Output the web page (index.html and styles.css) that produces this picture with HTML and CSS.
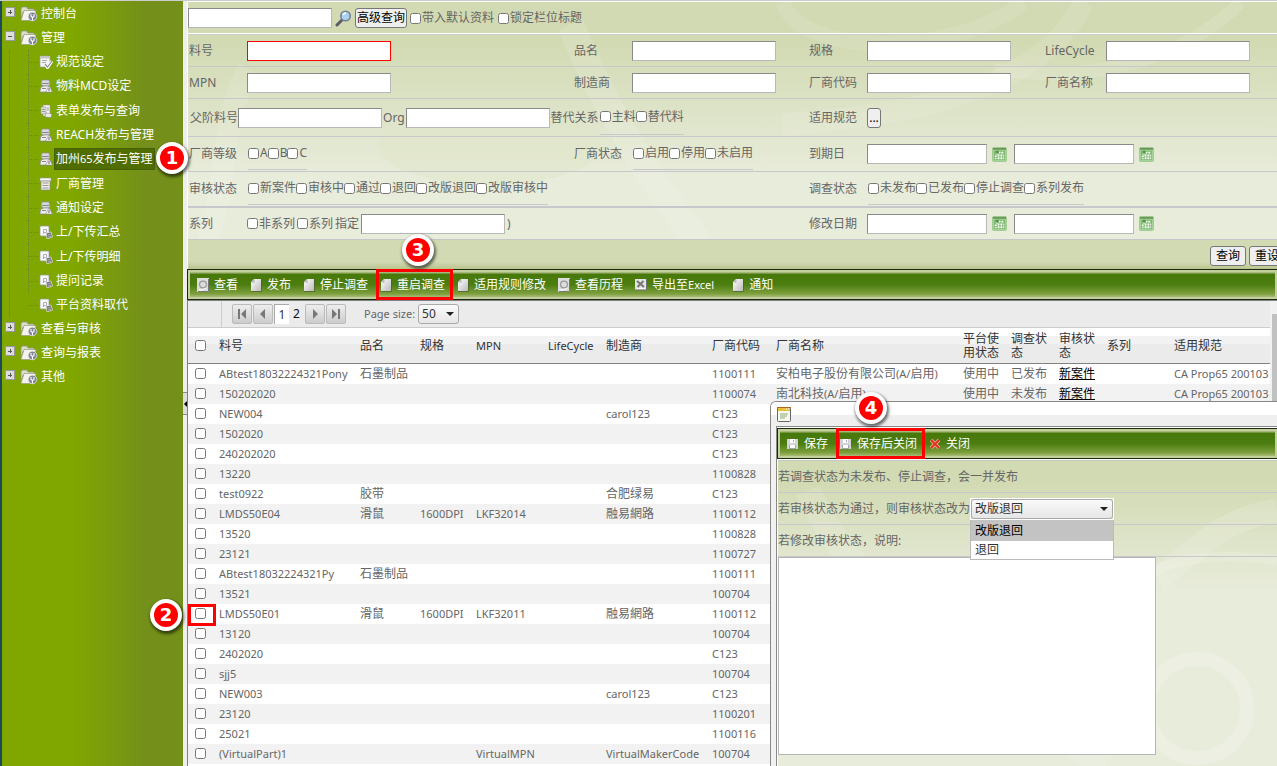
FILE: index.html
```html
<!DOCTYPE html>
<html lang="zh-CN">
<head>
<meta charset="utf-8">
<title>加州65发布与管理</title>
<link rel="stylesheet" href="styles.css">
</head>
<body>
<svg class="defs" aria-hidden="true">
  <defs>
    <linearGradient id="paper" x1="0" y1="0" x2="1" y2="1"><stop offset="0" stop-color="#fff"/><stop offset="1" stop-color="#bbb"/></linearGradient>
    <symbol id="i-folder" viewBox="0 0 18 16">
      <path d="M1 3l1-2h5l1 2h6v3H3L1 13z" fill="#d9dccb" stroke="#8c9080" stroke-width=".7"/>
      <path d="M4 4.500h12l-2 10H1z" fill="#f4f4ec" stroke="#959b80" stroke-width=".7"/>
      <circle cx="12.500" cy="10.500" r="4.300" fill="#7d8492" stroke="#e4e6e8" stroke-width=".8"/>
      <path d="M11 8v2.500l1.500 1 1.500-1V8M12.500 11.500v3" stroke="#fff" stroke-width="1.100" fill="none"/>
    </symbol>
    <symbol id="i-form" viewBox="0 0 14 14">
      <path d="M1 1h10v11H1z" fill="#f4f4f4" stroke="#999" stroke-width=".7"/>
      <path d="M1 1h10v2.500H1z" fill="#c4c4c4"/><path d="M3 5.500h5M3 7.500h4" stroke="#aaa"/>
      <path d="M6 9l2.500 3.500L13 6" stroke="#fff" stroke-width="3" fill="none"/><path d="M6 9l2.500 3L13 6" stroke="#8a8f93" stroke-width="1.200" fill="none"/>
    </symbol>
    <symbol id="i-user" viewBox="0 0 14 14">
      <path d="M3 1h7l1 4-1 2H4L2 5z" fill="#d9d9dd" stroke="#8b8f94" stroke-width=".7"/>
      <path d="M1 12l1-4 3-1h5l2 2v4H1z" fill="#eee" stroke="#888" stroke-width=".7"/>
      <path d="M3 4.500h7M3 9.500h4" stroke="#83898f"/><path d="M10 7l3.500 6h-7z" fill="#f7f7f7" stroke="#888" stroke-width=".6"/><path d="M10 9v3" stroke="#666"/>
    </symbol>
    <symbol id="i-stack" viewBox="0 0 14 14">
      <path d="M4 1h7v11H4z" fill="#f4f4f4" stroke="#999" stroke-width=".6"/><path d="M2 3h5v7H2z" fill="#ddd" stroke="#999" stroke-width=".6"/>
      <path d="M3 5.500h3M3 7.500h3M8 4h2M8 6h2" stroke="#999"/><path d="M7 9l6 1-1 3.500-6-.5z" fill="#eee" stroke="#888" stroke-width=".6"/>
    </symbol>
    <symbol id="i-list" viewBox="0 0 14 14">
      <path d="M1 1h11v3H1z" fill="#fafafa" stroke="#999" stroke-width=".6"/><path d="M2 4h9v9H2z" fill="#ededed" stroke="#8b8b8b" stroke-width=".7"/>
      <path d="M3.500 6h6M3.500 8.500h6M3.500 11h6" stroke="#999"/>
    </symbol>
    <symbol id="i-copy" viewBox="0 0 14 14">
      <rect x="1" y="1" width="9" height="10" rx="1" fill="#f8f8f8" stroke="#999" stroke-width=".7"/><path d="M4.500 9V4.500h3v3h-3" fill="none" stroke="#aab0b8"/>
      <path d="M7 8l5-1 1.500 5-5.500 2z" fill="#72777c" stroke="#e9e9e9" stroke-width=".7"/><path d="M8.500 10l3-.5M9 12l3-.6" stroke="#ddd" stroke-width=".6"/>
    </symbol>
    <symbol id="i-view" viewBox="0 0 12 14">
      <path d="M0 0h12v14H0z" fill="#ddd"/><path d="M11.500 1v12.500H1" stroke="#777" fill="none"/><circle cx="6" cy="6.500" r="4" fill="#969696"/><circle cx="6" cy="6.500" r="2.800" fill="#dcdcdc"/><path d="M2 12h3l4-2" stroke="#fff" fill="none"/>
    </symbol>
    <symbol id="i-page" viewBox="0 0 12 14">
      <path d="M1 4l3-3h7v12H1z" fill="url(#paper)"/><path d="M1 4.500h3.500V1z" fill="#b5b5b5"/><path d="M11.500 1v12.500H1" stroke="#4d5d30" stroke-width=".7" fill="none"/>
    </symbol>
    <symbol id="i-excel" viewBox="0 0 12 14">
      <path d="M0 1h12v11H0z" fill="#e5e5e5"/><path d="M11.500 1v11H0" stroke="#737373" fill="none"/><path d="M2 3l7 6M8.500 3l-6 6" stroke="#777" stroke-width="2"/><path d="M2 10.500h8" stroke="#fff"/>
    </symbol>
    <symbol id="i-save" viewBox="0 0 12 12">
      <path d="M0 1h11v10H0z" fill="#d4d4d8"/><path d="M3 1h5v4H3z" fill="#fff"/><path d="M6 2h1v2H6zM2 7h7v4H2z" fill="#a3a4aa"/><path d="M3 7h5v3H3z" fill="#fff"/>
    </symbol>
    <symbol id="i-close" viewBox="0 0 12 12">
      <path d="M2 2l8 8M10 2l-8 8" stroke="#f0a898" stroke-width="3.600"/><path d="M2 2l8 8M10 2l-8 8" stroke="#e03020" stroke-width="1.800"/>
    </symbol>
    <symbol id="i-cal" viewBox="0 0 16 16">
      <rect x=".5" y=".5" width="15" height="15" rx="1.500" fill="#a5d69a" stroke="#9fc993"/><path d="M1 1h14v2H1z" fill="#6d9855"/><path d="M2 4h12v10H2z" fill="#7cb96c"/>
      <path d="M4 6h2v2H4zM7 5h2v2H7zM10 5h2v2h-2zM3 9h2v2H3zM6 8h2v2H6zM9 8h2v2H9zM12 8h1v2h-1zM3 12h2v1H3zM6 11h2v2H6zM9 11h2v2H9zM12 11h1v2h-1z" fill="#fff"/><path d="M4 4h3v3H4z" fill="#4f9745"/>
    </symbol>
  </defs>
</svg>

<div class="app">
  <nav class="sidebar">
    <ul class="tree">
      <li><i class="knob plus"></i><svg class="folder"><use href="#i-folder"/></svg><a href="#">控制台</a></li>
      <li><i class="knob"></i><svg class="folder"><use href="#i-folder"/></svg><a href="#">管理</a></li>
    </ul>
    <ul class="tree subtree">
      <li><svg><use href="#i-form"/></svg><a href="#">规范设定</a></li>
      <li><svg><use href="#i-user"/></svg><a href="#">物料MCD设定</a></li>
      <li><svg><use href="#i-stack"/></svg><a href="#">表单发布与查询</a></li>
      <li><svg><use href="#i-user"/></svg><a href="#">REACH发布与管理</a></li>
      <li><svg><use href="#i-user"/></svg><a href="#" class="active">加州<span class="latin">65</span>发布与管理</a></li>
      <li><svg><use href="#i-list"/></svg><a href="#">厂商管理</a></li>
      <li><svg><use href="#i-user"/></svg><a href="#">通知设定</a></li>
      <li><svg><use href="#i-copy"/></svg><a href="#">上/下传汇总</a></li>
      <li><svg><use href="#i-copy"/></svg><a href="#">上/下传明细</a></li>
      <li><svg><use href="#i-copy"/></svg><a href="#">提问记录</a></li>
      <li><svg><use href="#i-copy"/></svg><a href="#">平台资料取代</a></li>
    </ul>
    <ul class="tree">
      <li><i class="knob plus"></i><svg class="folder"><use href="#i-folder"/></svg><a href="#">查看与审核</a></li>
      <li><i class="knob plus"></i><svg class="folder"><use href="#i-folder"/></svg><a href="#">查询与报表</a></li>
      <li><i class="knob plus"></i><svg class="folder"><use href="#i-folder"/></svg><a href="#">其他</a></li>
    </ul>
  </nav>
  <div class="splitter"><button class="collapse" aria-label="收起"></button></div>

  <main class="main">
    <form class="query">
      <svg class="swirl" viewBox="0 0 1089 240" preserveAspectRatio="none" aria-hidden="true">
        <g fill="none" stroke="#fff">
          <path d="M590 0C610 50 760 50 830 0" stroke-width="14" opacity=".1"/>
          <path d="M590 110C750 100 850 70 890 0" stroke-width="20" opacity=".1"/>
          <path d="M800 60C900 75 990 50 1045 0" stroke-width="12" opacity=".12"/>
          <path d="M380 20C410 90 470 180 530 240" stroke-width="26" opacity=".12"/>
          <path d="M10 240C40 180 30 110 60 60" stroke-width="22" opacity=".1"/>
          <path d="M330 240C360 220 380 220 400 240" stroke-width="5" opacity=".2"/>
        </g>
        <ellipse cx="300" cy="130" rx="110" ry="34" fill="#dfe6c8" opacity=".5"/>
      </svg>
      <div class="searchbar">
        <input type="text" aria-label="快速查询">
        <svg class="lens" viewBox="0 0 17 17"><path d="M2 15l5-5" stroke="#5c5c66" stroke-width="3" stroke-linecap="round"/><circle cx="10.500" cy="6" r="4.700" fill="#a9d3ee" stroke="#787f93" stroke-width="1.600"/><path d="M8 5q1-2 3-2" stroke="#fff" stroke-width="1.500" fill="none"/></svg>
        <button type="button">高级查询</button>
        <label class="check"><input type="checkbox">带入默认资料</label>
        <label class="check spaced"><input type="checkbox">锁定栏位标题</label>
      </div>
      <div class="fields">
        <div class="row">
          <label for="pn">料号</label><input id="pn" class="required" type="text">
          <label for="name">品名</label><input id="name" type="text">
          <label for="spec">规格</label><input id="spec" type="text">
          <label for="lc">LifeCycle</label><input id="lc" type="text">
        </div>
        <div class="row">
          <label for="mpn">MPN</label><input id="mpn" type="text">
          <label for="maker">制造商</label><input id="maker" type="text">
          <label for="vcode">厂商代码</label><input id="vcode" type="text">
          <label for="vname">厂商名称</label><input id="vname" type="text">
        </div>
        <div class="row tall">
          <div class="parent"><label for="parent">父阶料号</label><input id="parent" type="text"><label for="org" class="org">Org</label><input id="org" type="text"><span>替代关系</span>
            <div class="checks"><label class="check"><input type="checkbox">主料</label><label class="check"><input type="checkbox">替代料</label></div></div>
          <span class="label">适用规范</span><div><button type="button" class="more">...</button></div>
        </div>
        <div class="row mid">
          <span class="label">厂商等级</span>
          <div class="checks"><label class="check"><input type="checkbox">A</label><label class="check"><input type="checkbox">B</label><label class="check"><input type="checkbox">C</label></div>
          <span class="label">厂商状态</span>
          <div class="checks"><label class="check"><input type="checkbox">启用</label><label class="check"><input type="checkbox">停用</label><label class="check"><input type="checkbox">未启用</label></div>
          <span class="label">到期日</span>
          <div class="dates"><input type="text" aria-label="到期日起"><svg><use href="#i-cal"/></svg><input type="text" aria-label="到期日止"><svg><use href="#i-cal"/></svg></div>
        </div>
        <div class="row mid double">
          <span class="label">审核状态</span>
          <div class="checks wide"><label class="check"><input type="checkbox">新案件</label><label class="check"><input type="checkbox">审核中</label><label class="check"><input type="checkbox">通过</label><label class="check"><input type="checkbox">退回</label><label class="check"><input type="checkbox">改版退回</label><label class="check"><input type="checkbox">改版审核中</label></div>
          <span class="label">调查状态</span>
          <div class="checks rest"><label class="check"><input type="checkbox">未发布</label><label class="check"><input type="checkbox">已发布</label><label class="check"><input type="checkbox">停止调查</label><label class="check"><input type="checkbox">系列发布</label></div>
        </div>
        <div class="row">
          <span class="label">系列</span>
          <div class="series"><label class="check"><input type="checkbox">非系列</label><label class="check"><input type="checkbox">系列</label><label for="series">指定</label><input id="series" type="text"><span>)</span></div>
          <span class="label">修改日期</span>
          <div class="dates"><input type="text" aria-label="修改日期起"><svg><use href="#i-cal"/></svg><input type="text" aria-label="修改日期止"><svg><use href="#i-cal"/></svg></div>
        </div>
      </div>
      <div class="actions"><button type="button">查询</button><button type="reset">重设</button></div>
    </form>

    <div class="toolbar">
      <button><svg><use href="#i-view"/></svg>查看</button>
      <button><svg><use href="#i-page"/></svg>发布</button>
      <button><svg><use href="#i-page"/></svg>停止调查</button>
      <button class="marked"><svg><use href="#i-page"/></svg>重启调查</button>
      <button><svg><use href="#i-page"/></svg>适用规则修改</button>
      <button><svg><use href="#i-view"/></svg>查看历程</button>
      <button><svg><use href="#i-excel"/></svg><span>导出至<span class="latin">Excel</span></span></button>
      <button class="notify"><svg><use href="#i-page"/></svg>通知</button>
    </div>

    <div class="list">
      <div class="grid">
        <div class="pager">
          <button aria-label="首页"><svg viewBox="0 0 10 10"><path d="M1 0h2v10H1zM9 0v10L4 5z"/></svg></button>
          <button aria-label="上一页"><svg viewBox="0 0 10 10"><path d="M7 0v10L2 5z"/></svg></button>
          <a href="#" class="current">1</a><a href="#">2</a>
          <button aria-label="下一页"><svg viewBox="0 0 10 10"><path d="M3 0v10l5-5z"/></svg></button>
          <button aria-label="末页"><svg viewBox="0 0 10 10"><path d="M1 0v10l5-5zM7 0h2v10H7z"/></svg></button>
          <label for="size" class="latin">Page size:</label>
          <span class="combo"><select id="size"><option>50</option></select></span>
        </div>
        <table>
          <colgroup><col class="w-check"><col class="w-pn"><col class="w-name"><col class="w-spec"><col class="w-mpn"><col class="w-life"><col class="w-maker"><col class="w-code"><col class="w-vendor"><col class="w-state"><col class="w-state"><col class="w-state"><col class="w-series"><col></colgroup>
          <thead><tr><th><input type="checkbox" aria-label="全选"></th><th>料号</th><th>品名</th><th>规格</th><th class="latin">MPN</th><th class="latin">LifeCycle</th><th>制造商</th><th>厂商代码</th><th>厂商名称</th><th>平台使用状态</th><th>调查状态</th><th>审核状态</th><th>系列</th><th>适用规范</th></tr></thead>
          <tbody>
            <tr><td><input type="checkbox" aria-label="选择"></td><td>ABtest18032224321Pony</td><td class="cjk">石墨制品</td><td></td><td></td><td></td><td></td><td>1100111</td><td class="cjk">安柏电子股份有限公司<span class="latin">(A/</span>启用<span class="latin">)</span></td><td class="cjk">使用中</td><td class="cjk">已发布</td><td class="cjk"><a href="#">新案件</a></td><td></td><td>CA Prop65 200103</td></tr>
            <tr><td><input type="checkbox" aria-label="选择"></td><td>150202020</td><td></td><td></td><td></td><td></td><td></td><td>1100074</td><td class="cjk">南北科技<span class="latin">(A/</span>启用<span class="latin">)</span></td><td class="cjk">使用中</td><td class="cjk">未发布</td><td class="cjk"><a href="#">新案件</a></td><td></td><td>CA Prop65 200103</td></tr>
            <tr><td><input type="checkbox" aria-label="选择"></td><td>NEW004</td><td></td><td></td><td></td><td></td><td>carol123</td><td>C123</td><td colspan="6"></td></tr>
            <tr><td><input type="checkbox" aria-label="选择"></td><td>1502020</td><td></td><td></td><td></td><td></td><td></td><td>C123</td><td colspan="6"></td></tr>
            <tr><td><input type="checkbox" aria-label="选择"></td><td>240202020</td><td></td><td></td><td></td><td></td><td></td><td>C123</td><td colspan="6"></td></tr>
            <tr><td><input type="checkbox" aria-label="选择"></td><td>13220</td><td></td><td></td><td></td><td></td><td></td><td>1100828</td><td colspan="6"></td></tr>
            <tr><td><input type="checkbox" aria-label="选择"></td><td>test0922</td><td class="cjk">胶带</td><td></td><td></td><td></td><td class="cjk">合肥绿易</td><td>C123</td><td colspan="6"></td></tr>
            <tr><td><input type="checkbox" aria-label="选择"></td><td>LMDS50E04</td><td class="cjk">滑鼠</td><td>1600DPI</td><td>LKF32014</td><td></td><td class="cjk">融易網路</td><td>1100112</td><td colspan="6"></td></tr>
            <tr><td><input type="checkbox" aria-label="选择"></td><td>13520</td><td></td><td></td><td></td><td></td><td></td><td>1100828</td><td colspan="6"></td></tr>
            <tr><td><input type="checkbox" aria-label="选择"></td><td>23121</td><td></td><td></td><td></td><td></td><td></td><td>1100727</td><td colspan="6"></td></tr>
            <tr><td><input type="checkbox" aria-label="选择"></td><td>ABtest18032224321Py</td><td class="cjk">石墨制品</td><td></td><td></td><td></td><td></td><td>1100111</td><td colspan="6"></td></tr>
            <tr><td><input type="checkbox" aria-label="选择"></td><td>13521</td><td></td><td></td><td></td><td></td><td></td><td>100704</td><td colspan="6"></td></tr>
            <tr><td><input type="checkbox" aria-label="选择"></td><td>LMDS50E01</td><td class="cjk">滑鼠</td><td>1600DPI</td><td>LKF32011</td><td></td><td class="cjk">融易網路</td><td>1100112</td><td colspan="6"></td></tr>
            <tr><td><input type="checkbox" aria-label="选择"></td><td>13120</td><td></td><td></td><td></td><td></td><td></td><td>100704</td><td colspan="6"></td></tr>
            <tr><td><input type="checkbox" aria-label="选择"></td><td>2402020</td><td></td><td></td><td></td><td></td><td></td><td>C123</td><td colspan="6"></td></tr>
            <tr><td><input type="checkbox" aria-label="选择"></td><td>sjj5</td><td></td><td></td><td></td><td></td><td></td><td>100704</td><td colspan="6"></td></tr>
            <tr><td><input type="checkbox" aria-label="选择"></td><td>NEW003</td><td></td><td></td><td></td><td></td><td>carol123</td><td>C123</td><td colspan="6"></td></tr>
            <tr><td><input type="checkbox" aria-label="选择"></td><td>23120</td><td></td><td></td><td></td><td></td><td></td><td>1100201</td><td colspan="6"></td></tr>
            <tr><td><input type="checkbox" aria-label="选择"></td><td>25021</td><td></td><td></td><td></td><td></td><td></td><td>1100116</td><td colspan="6"></td></tr>
            <tr><td><input type="checkbox" aria-label="选择"></td><td>(VirtualPart)1</td><td></td><td></td><td>VirtualMPN</td><td></td><td>VirtualMakerCode</td><td>100704</td><td colspan="6"></td></tr>
          </tbody>
        </table>
      </div>
      <div class="scrollbar"><div class="thumb"></div></div>
    </div>
  </main>
</div>

<section class="dialog" role="dialog" aria-label="重启调查">
  <header><svg viewBox="0 0 14 15"><rect x=".5" y=".5" width="13" height="14" rx="1" fill="#f7f9f1" stroke="#666"/><path d="M1 1h12v3H1z" fill="#edbd3c"/><path d="M0 .5h14" stroke="#a96a20"/><path d="M9 2h1M11 2h1" stroke="#fff"/><path d="M3 7h8M3 9h7M3 11h5" stroke="#86a873"/></svg></header>
  <div class="dialog-body">
    <div class="toolbar">
      <button><svg><use href="#i-save"/></svg>保存</button>
      <button class="marked"><svg><use href="#i-save"/></svg>保存后关闭</button>
      <button><svg><use href="#i-close"/></svg>关闭</button>
    </div>
    <div class="panel">
      <svg class="swirl" viewBox="0 0 500 308" preserveAspectRatio="none" aria-hidden="true"><g fill="none" stroke="#fff">
        <path d="M30 30C60 100 150 200 330 308" stroke-width="26" opacity=".12"/><circle cx="420" cy="250" r="50" stroke-width="14" opacity=".18"/><path d="M380 120C420 90 440 60 500 50" stroke-width="24" opacity=".14"/><path d="M320 160C360 100 420 90 500 100" stroke-width="10" opacity=".16"/></g></svg>
      <p>若调查状态为未发布、停止调查，会一并发布</p>
      <div class="line"><label for="state">若审核状态为通过，则审核状态改为</label>
        <span class="combo state"><select id="state"><option>改版退回</option><option>退回</option></select>
          <ul class="menu"><li class="chosen">改版退回</li><li>退回</li></ul></span></div>
      <div class="line"><label for="note">若修改审核状态，说明:</label></div>
      <textarea id="note"></textarea>
    </div>
  </div>
</section>

<div class="frame-row"></div>
<span class="badge badge-1">1</span>
<span class="badge badge-2">2</span>
<span class="badge badge-3">3</span>
<span class="badge badge-4">4</span>
</body>
</html>
```
FILE: styles.css
```css
* { box-sizing: border-box; }
body { margin: 0; height: 100vh; overflow: hidden; position: relative; background: #fff; color: #666; font: 12px/16px "Noto Sans", "Noto Sans CJK SC", sans-serif; }
ul, p { margin: 0; padding: 0; list-style: none; }
input, button, select, textarea { font: inherit; margin: 0; }
.latin { font-size: 11px; }
.defs { position: absolute; width: 0; height: 0; }
input[type="text"] { width: 144px; height: 20px; border: 1px solid; border-color: #8a8a8a #b8b8b8 #b8b8b8 #8a8a8a; background: #fff; padding: 0 2px; }
input[type="text"].required { border-color: #f00; }
input[type="checkbox"] { width: 11px; height: 11px; margin: 0 1px 0 0; flex: none; }

.app { display: flex; height: 100%; border-top: 1px solid #ccc; }

/* navigation tree */
.sidebar { flex: none; width: 183px; padding-top: 1px; border-left: 2px solid #1c4a58; background: linear-gradient(90deg, #80a600 40%, #74901a 78%); color: #fff; }
.tree { padding-left: 2px; }
.tree li { height: 24px; display: flex; align-items: center; }
.tree a { color: #fff; text-decoration: none; padding: 3px 2px; white-space: nowrap; }
.tree a.active { background: #506e00; border: 1px solid #45600a; padding: 2px 1px; }
.knob { width: 10px; height: 10px; margin: 0 5px 4px 1px; border: 1px solid #999; background: linear-gradient(#555, #555) center / 4px 1px no-repeat, #ddd; }
.knob.plus { background: linear-gradient(#555, #555) center / 4px 1px no-repeat, linear-gradient(#555, #555) center / 1px 4px no-repeat, #ddd; }
.folder { width: 18px; height: 16px; margin-right: 1px; }
.subtree { margin-left: 7px; padding-left: 18px; border-left: 1px dotted #6c8132; }
.subtree li { border-left: 1px dotted #6c8132; }
.subtree li:last-child { border-left-color: transparent; }
.subtree li::before { content: ""; width: 9px; border-top: 1px dotted #6c8132; margin-right: 1px; }
.subtree li:nth-child(3n) { height: 25px; }
.subtree li svg { width: 14px; height: 14px; margin-right: 1px; }
.splitter { flex: none; width: 4px; background: #eee; padding-top: 391px; }
.collapse { display: block; width: 4px; height: 23px; border: 0; border-block: 1px solid #888; padding: 0; background: #ddd; }
.collapse::before { content: ""; display: block; border: 3px solid transparent; border-left: 0; border-right-color: #000; }

.main { flex: 1; min-width: 0; overflow: hidden; display: flex; flex-direction: column; }
.swirl { position: absolute; inset: 0; width: 100%; height: 100%; pointer-events: none; }

/* query form */
.query { position: relative; width: calc(100% + 8px); border-top: 1px solid #fff; border-left: 1px solid #fff; background: linear-gradient(#d2dab3 40px, #e8ecdb 175px); }
.query > div { position: relative; }
.searchbar { display: flex; align-items: center; height: 33px; border-bottom: 1px solid #ccc; box-shadow: inset 0 -1px #fff; }
.lens { width: 17px; height: 17px; margin: 0 3px; }
.query button { height: 20px; border: 1px solid #777; border-radius: 3px; background: #efefef; color: #000; padding: 0 1px; line-height: 18px; white-space: nowrap; }
.searchbar button { width: 52px; margin-right: 3px; }
.check { display: flex; align-items: center; white-space: nowrap; }
.check.spaced { margin-left: 4px; }
.row { display: grid; grid-template-columns: 59px 326px 59px 176px 59px 177px 62px 1fr; align-items: center; height: 32px; border-bottom: 1px solid #c8c8cc; }
.row > label, .label { padding-left: 1px; white-space: nowrap; }
.row.tall { height: 38px; }
.row.mid { height: 35px; }
.row.mid.double { height: 36px; border-bottom-width: 2px; }
.parent { grid-column: span 4; display: flex; align-items: center; padding-left: 2px; height: 100%; }
.parent .org { padding: 0 1px; }
.parent > span { padding-left: 1px; }
.checks { display: flex; padding-left: 1px; align-self: stretch; }
.checks .check { border-bottom: 1px solid #c8c8cc; margin-bottom: 1px; }
.wide, .series { grid-column: span 3; }
.rest, .dates { grid-column: span 3; }
.query .more { width: 14px; padding: 0; }
.dates { display: flex; align-items: center; }
.dates input[type="text"] { width: 120px; }
.dates svg { width: 15px; height: 15px; margin: 0 7px 0 5px; }
.series { display: flex; align-items: center; gap: 2px; }
.actions { display: flex; gap: 3px; justify-content: flex-end; padding: 6px 0 3px; background: linear-gradient(#d2dab3 75%, #b9c48e); }
.query .actions button { width: 36px; }

/* command bars */
.toolbar { flex: none; height: 31px; display: flex; align-items: stretch; padding: 0 4px; border: 1px solid #1c2a10; border-right: 0; box-shadow: inset 0 0 0 2px #c3cf9c; background: linear-gradient(#a8b87c 3px, #46780a 4px, #4b7d10 50%, #7d9f3d 82%, #b4c488 96%); }
.toolbar button { display: flex; align-items: center; gap: 5px; border: 0; background: none; color: #fff; padding: 0 8px 0 4px; white-space: nowrap; }
.main > .toolbar { padding-left: 5px; }
.toolbar svg { width: 12px; height: 14px; }
.toolbar .marked { box-shadow: inset 0 0 0 3px #f00; margin-block: -1px; }
.toolbar .notify { margin-left: 6px; }

/* list */
.list { flex: 1; min-height: 0; display: flex; border-top: 1px solid #808080; }
.grid { flex: 1; min-width: 0; overflow: hidden; border-left: 1px solid #808080; }
.pager { display: flex; align-items: center; height: 27px; margin-bottom: 4px; padding-left: 44px; border-bottom: 1px solid #ccc; background: linear-gradient(#ccc, #ccc) 33px 0 / 1px 100% no-repeat, #ebebeb; }
.pager button { width: 20px; height: 20px; margin-right: 1px; padding: 4px; border: 1px solid #bbb; border-radius: 2px; background: linear-gradient(#eee, #ccc); }
.pager button svg { display: block; width: 10px; height: 10px; fill: #777; }
.pager a { width: 15px; line-height: 20px; text-align: center; color: #111; text-decoration: none; }
.pager .current { background: #fff; border-left: 1px solid #aaa; border-top: 1px solid #aaa; line-height: 19px; color: #333; }
.pager a + button { margin-left: 1px; }
.pager label { margin: 0 3px 0 17px; }
.combo { position: relative; display: block; width: 41px; }
.combo select { display: block; width: 100%; height: 20px; padding: 0 3px; appearance: none; border: 1px solid #aaa; border-radius: 3px; background: linear-gradient(#fafafa, #e6e6e6); color: #333; line-height: 16px; }
.combo::after { content: ""; position: absolute; right: 5px; top: 8px; border: 4px solid transparent; border-top-color: #222; border-bottom: 0; pointer-events: none; }

table { width: 100%; table-layout: fixed; border-collapse: collapse; }
.w-check { width: 24px; } .w-pn { width: 141px; } .w-name { width: 60px; } .w-spec { width: 56px; } .w-mpn { width: 72px; }
.w-life { width: 58px; } .w-maker { width: 106px; } .w-code { width: 64px; } .w-vendor { width: 187px; } .w-state { width: 48px; } .w-series { width: 67px; }
th { height: 31px; padding: 0 2px 3px 7px; text-align: left; font-weight: normal; line-height: 14px; color: #333; background: linear-gradient(#fff 4px, #f2f2f2 4px, #f2f2f2 12px, #ebebeb 12px); border-bottom: 1px solid #828282; }
td { height: 20px; padding: 0 0 0 7px; font-size: 11px; line-height: 20px; white-space: nowrap; color: #666; }
td.cjk { font-size: 12px; }
td a { color: #000; }
td input[type="checkbox"], th input[type="checkbox"] { display: block; margin-bottom: 2px; }
tbody tr:nth-child(even) { background: #f2f2f2; }
.scrollbar { flex: none; width: 7px; padding: 13px 0 0 2px; background: #f1f1f1; }
.thumb { height: 60%; background: #c1c1c1; }

/* window over the list */
.dialog { position: absolute; left: 770px; right: 0; top: 401px; bottom: 0; padding-left: 5px; border: 1px solid #888; border-width: 1px 0 0 1px; border-radius: 6px 0 0 0; background: #f1f1f1; display: flex; flex-direction: column; }
.dialog header { height: 24px; margin-left: -5px; padding: 5px 0 0 6px; border-radius: 5px 0 0 0; background: linear-gradient(#fff 55%, #efefef 55%); }
.dialog header svg { width: 14px; height: 15px; display: block; }
.dialog-body { flex: 1; border: 1px solid #888; border-width: 1px 0 0 1px; display: flex; flex-direction: column; background: #fff; }
.dialog .toolbar { padding: 0 5px; margin-top: 1px; }
.dialog .toolbar svg { height: 12px; }
.panel { position: relative; flex: 1; margin: 1px 0 0 1px; border-top: 1px solid #c8c8cc; background: linear-gradient(#d2dab3 20px, #e8ecdb 130px); }
.panel p, .line { position: relative; height: 32px; line-height: 31px; border-bottom: 1px solid #c8c8cc; display: flex; align-items: center; }
.panel > .line:nth-of-type(1) { z-index: 1; }
.state { width: 144px; height: 22px; border: 1px solid #fff; }
.menu { position: absolute; top: 21px; left: -1px; width: 144px; border: 1px solid #bbb; border-top: 0; background: #fff; color: #333; line-height: 18px; }
.menu li { padding-left: 4px; }
.menu .chosen { background: #c3c3c3; color: #000; line-height: 21px; }
textarea { position: relative; display: block; width: 378px; height: 198px; border: 1px solid #b5b5b5; resize: none; background: #fff; }

/* step markers */
.frame-row { position: absolute; left: 188px; top: 604px; width: 28px; height: 22px; border: 3px solid #f00; }
.badge { position: absolute; width: 32px; height: 32px; border: 4px solid #fff; border-radius: 50%; background: #f00; box-shadow: 1px 2px 3px 1px rgba(0, 0, 0, .55); color: #fff; font: bold 18px/24px "DejaVu Sans", sans-serif; text-align: center; }
.badge-1 { left: 156px; top: 142px; }
.badge-2 { left: 150px; top: 599px; }
.badge-3 { left: 402px; top: 234px; }
.badge-4 { left: 855px; top: 392px; }
```
